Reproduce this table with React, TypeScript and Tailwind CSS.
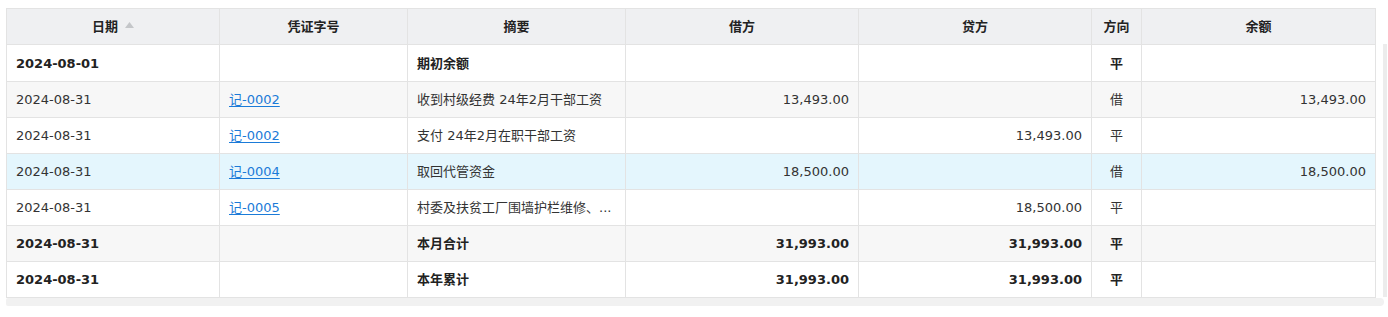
import React from 'react'

type Row = {
  date: string
  voucher?: string
  summary: string
  debit?: string
  credit?: string
  dir: string
  balance?: string
  bold?: boolean
  bg: string
}

const rows: Row[] = [
  { date: '2024-08-01', summary: '期初余额', dir: '平', bold: true, bg: 'bg-white' },
  {
    date: '2024-08-31',
    voucher: '记-0002',
    summary: '收到村级经费 24年2月干部工资',
    debit: '13,493.00',
    dir: '借',
    balance: '13,493.00',
    bg: 'bg-[#f7f7f7]',
  },
  {
    date: '2024-08-31',
    voucher: '记-0002',
    summary: '支付 24年2月在职干部工资',
    credit: '13,493.00',
    dir: '平',
    bg: 'bg-white',
  },
  {
    date: '2024-08-31',
    voucher: '记-0004',
    summary: '取回代管资金',
    debit: '18,500.00',
    dir: '借',
    balance: '18,500.00',
    bg: 'bg-[#e4f6fd]',
  },
  {
    date: '2024-08-31',
    voucher: '记-0005',
    summary: '村委及扶贫工厂围墙护栏维修、...',
    credit: '18,500.00',
    dir: '平',
    bg: 'bg-white',
  },
  {
    date: '2024-08-31',
    summary: '本月合计',
    debit: '31,993.00',
    credit: '31,993.00',
    dir: '平',
    bold: true,
    bg: 'bg-[#f7f7f7]',
  },
  {
    date: '2024-08-31',
    summary: '本年累计',
    debit: '31,993.00',
    credit: '31,993.00',
    dir: '平',
    bold: true,
    bg: 'bg-white',
  },
]

const grid = 'grid grid-cols-[213px_188px_218px_233px_233px_50px_234px]'
const base = 'flex items-center border-r border-b border-[#e3e3e3] px-[9px] overflow-hidden whitespace-nowrap'
const cell = `${base} h-[36px] pt-[1px]`
const head = `${base} h-[36px] justify-center`

export default function App() {
  return (
    <div
      className="min-h-[317px] bg-white pl-[6px] pt-[8px] text-[13px] text-[#333]"
      style={{ fontFamily: '"DejaVu Sans", "Noto Sans CJK SC", sans-serif' }}
    >
      <div className="flex">
        <div className="w-[1370px] border-l border-t border-[#e3e3e3]">
          <div className={`${grid} bg-[#eff0f2] font-bold text-[#222]`}>
            <div className={`${head} gap-[7px]`}>
              <span>日期</span>
              <svg width="9" height="6" viewBox="0 0 9 6" className="mb-[4px]">
                <polygon points="4.5,0 9,6 0,6" fill="#c4c6c9" />
              </svg>
            </div>
            <div className={head}>凭证字号</div>
            <div className={head}>摘要</div>
            <div className={head}>借方</div>
            <div className={head}>贷方</div>
            <div className={head}>方向</div>
            <div className={head}>余额</div>
          </div>

          {rows.map((r, i) => (
            <div
              key={i}
              className={`${grid} ${r.bg} ${r.bold ? 'font-bold text-[#222]' : ''} ${i === 0 ? '[&>div]:h-[37px]' : ''}`}
            >
              <div className={cell}>{r.date}</div>
              <div className={cell}>
                {r.voucher && (
                  <a href="#" className="text-[#1b7bd8] underline underline-offset-2">
                    {r.voucher}
                  </a>
                )}
              </div>
              <div className={cell}>{r.summary}</div>
              <div className={`${cell} justify-end`}>{r.debit}</div>
              <div className={`${cell} justify-end`}>{r.credit}</div>
              <div className={`${cell} justify-center`}>{r.dir}</div>
              <div className={`${cell} justify-end`}>{r.balance}</div>
            </div>
          ))}
        </div>
        <div className="ml-[7px] mt-[36px] h-[253px] w-[4px] bg-[#ececec]" />
      </div>
      <div className="h-[8px] w-[1378px] rounded-r-[4px] rounded-l-[2px] bg-[#f1f1f1]" />
    </div>
  )
}
